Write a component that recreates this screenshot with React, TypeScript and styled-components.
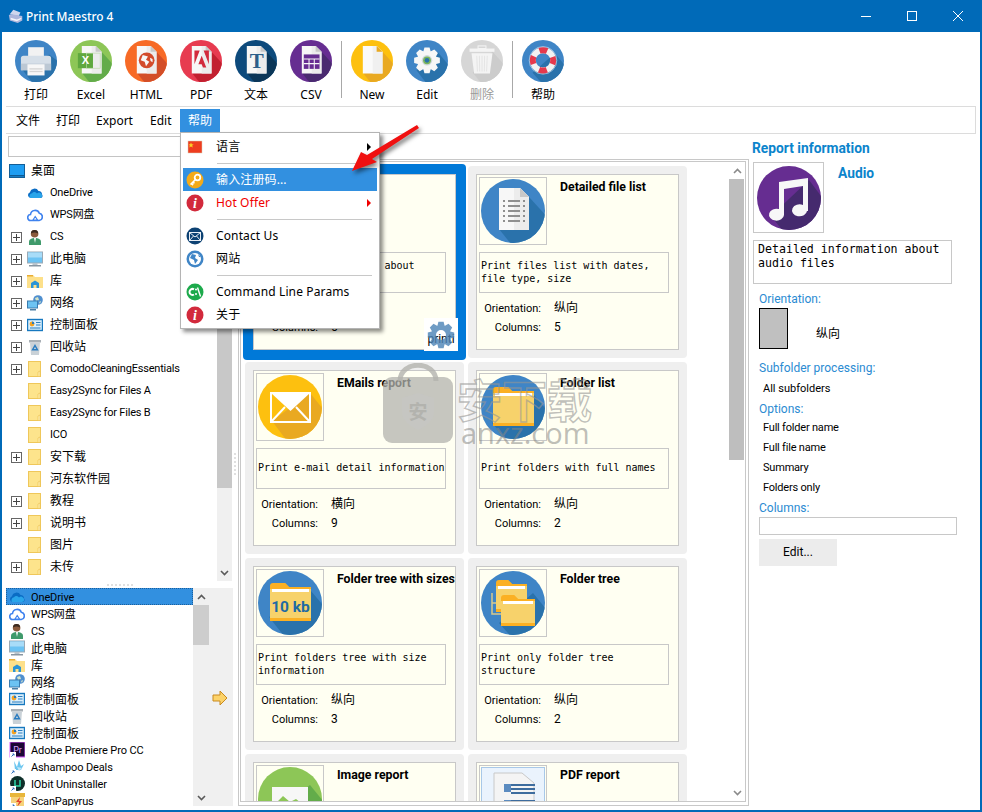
import React, { useId } from "react";
import styled, { createGlobalStyle } from "styled-components";

const Global = createGlobalStyle`
  html, body { margin: 0; padding: 0; background: #fff; }
  * { box-sizing: border-box; }
  body { font-family: Roboto, "Noto Sans CJK SC", sans-serif; font-size: 11px; color: #000; }
`;

const CJK = `"Noto Sans CJK SC", sans-serif`;
const UI = `"Noto Sans", ${CJK}`;
const SMALL = `Roboto, ${CJK}`;
const MONO = `"DejaVu Sans Mono", "Liberation Mono", monospace`;

const Window = styled.div`
  position: relative;
  width: 982px;
  height: 812px;
  border: 2px solid #006ab8;
  border-top: 0;
  display: flex;
  flex-direction: column;
  overflow: hidden;
  background: #fff;
`;
const TitleBar = styled.header`
  height: 32px;
  background: #006ab8;
  display: flex;
  align-items: center;
  padding-left: 6px;
  color: #fff;
  flex: none;
`;
const TitleText = styled.span`
  font: 500 11.9px ${UI};
  margin-left: 2px;
  flex: 1;
`;
const WinButton = styled.span`
  width: 46px;
  height: 32px;
  display: flex;
  align-items: center;
  justify-content: center;
  margin-right: ${(p: { $last?: boolean }) => (p.$last ? "-1px" : "0")};
`;
const Toolbar = styled.div`
  height: 74px;
  flex: none;
  display: flex;
  align-items: flex-start;
  padding: 8px 0 0 6.5px;
`;
const ToolButton = styled.div<{ $off?: boolean }>`
  width: 55px;
  display: flex;
  flex-direction: column;
  align-items: center;
  font: 12px/18px ${UI};
  color: ${(p) => (p.$off ? "#9a9a9a" : "#000")};
  svg { display: block; margin-bottom: 4px; }
`;
const ToolSep = styled.div`
  width: 1px;
  height: 57px;
  margin: 1px 3px 0 2px;
  background: #a8a8a8;
`;
const MenuBar = styled.nav`
  height: 28px;
  width: 970px;
  margin-left: 4px;
  flex: none;
  border: 1px solid #dcdcdc;
  border-left: 0;
  display: flex;
  padding: 2px 0 0 2px;
`;
const MenuItem = styled.span<{ $active?: boolean; $w: number }>`
  width: ${(p) => p.$w}px;
  height: 23px;
  padding-left: 8px;
  font: 12px/23px ${UI};
  color: ${(p) => (p.$active ? "#fff" : "#000")};
  background: ${(p) => (p.$active ? "#3290e0" : "transparent")};
`;
const Main = styled.main`
  flex: 1;
  min-height: 0;
  display: flex;
`;

/* left column */
const LeftCol = styled.section`
  width: 236px;
  flex: none;
  display: flex;
  flex-direction: column;
  padding: 2px 0 4px 4px;
`;
const PathInput = styled.div`
  height: 21px;
  width: 224px;
  margin-left: 2px;
  border: 1px solid #c4c4c4;
  flex: none;
`;
const TreeRow0 = styled.div`
  margin-top: 2px;
  height: 422px;
  flex: none;
  display: flex;
`;
const Tree = styled.div`
  flex: none;
  width: 224px;
  margin-left: 2px;
  display: flex;
  overflow: hidden;
`;
const TreeBody = styled.div`
  flex: 1;
  min-width: 0;
  overflow: hidden;
  padding-top: 1px;
`;
const TreeItem = styled.div`
  height: 22px;
  display: flex;
  align-items: center;
  padding-left: 3px;
  font: 11px/22px ${SMALL};
  white-space: nowrap;
  svg { flex: none; }
`;
const TreeRoot = styled(TreeItem)`
  padding-left: 1px;
  gap: 6px;
  font-size: 12px;
`;
const Expander = styled.span<{ $on: boolean }>`
  width: 11px;
  height: 11px;
  margin-right: 5px;
  flex: none;
  border: ${(p) => (p.$on ? "1px solid #666" : "0")};
  background:
    ${(p) =>
      p.$on
        ? "linear-gradient(#444,#444) center/7px 1px no-repeat, linear-gradient(#444,#444) center/1px 7px no-repeat"
        : "none"};
`;
const TreeLabel = styled.span<{ $cjk?: boolean }>`
  margin-left: 7px;
  font-size: ${(p) => (p.$cjk ? "12px" : "11px")};
  letter-spacing: ${(p) => (p.$cjk ? "0" : "-0.2px")};
`;
const VGrip = styled.div`
  flex: 1;
  display: flex;
  align-items: center;
  justify-content: center;
  padding-top: 190px;
  &::before {
    content: "";
    width: 2px;
    height: 24px;
    background: repeating-linear-gradient(#e0e0e0 0 2px, transparent 2px 4px);
  }
`;
const HGrip = styled.div`
  height: 7px;
  width: 227px;
  flex: none;
  display: flex;
  align-items: center;
  justify-content: center;
  &::before {
    content: "";
    width: 26px;
    height: 2px;
    background: repeating-linear-gradient(90deg, #e0e0e0 0 2px, transparent 2px 4px);
  }
`;
const Bottom = styled.div`
  flex: 1;
  min-height: 0;
  display: flex;
  width: 227px;
  overflow: hidden;
`;
const ListBody = styled.div`
  width: 187px;
  flex: none;
  overflow: hidden;
`;
const ListItem = styled.div<{ $sel?: boolean }>`
  height: 17px;
  display: flex;
  align-items: center;
  gap: 6px;
  padding-left: 3px;
  font: 11px/17px ${SMALL};
  white-space: nowrap;
  background: ${(p) => (p.$sel ? "#3290e0" : "transparent")};
  outline: ${(p) => (p.$sel ? "1px dotted #1c5f9c" : "none")};
  outline-offset: -1px;
  svg { flex: none; }
`;
const ListLabel = styled.span<{ $cjk?: boolean }>`
  font-size: ${(p) => (p.$cjk ? "12px" : "11px")};
  letter-spacing: ${(p) => (p.$cjk ? "0" : "-0.12px")};
  padding-top: ${(p) => (p.$cjk ? "3px" : "2px")};
`;
const MoveStrip = styled.div`
  flex: 1;
  background: #f0f0f0;
  display: flex;
  align-items: flex-start;
  padding: 102px 0 0 3px;
`;

/* scrollbars */
const VBar = styled.div<{ $w: number; $bg: string }>`
  width: ${(p) => p.$w}px;
  flex: none;
  display: flex;
  flex-direction: column;
  background: ${(p) => p.$bg};
`;
const BarArrow = styled.div<{ $h: number }>`
  height: ${(p) => p.$h}px;
  flex: none;
  display: flex;
  align-items: center;
  justify-content: center;
`;
const BarTrack = styled.div`
  flex: 1;
  min-height: 0;
`;
const BarThumb = styled.div<{ $top: number; $h: number; $c: string; $inset: number }>`
  margin-top: ${(p) => p.$top}px;
  margin-right: ${(p) => p.$inset}px;
  height: ${(p) => p.$h}px;
  background: ${(p) => p.$c};
`;

/* centre */
const CenterCol = styled.section`
  width: 511px;
  flex: none;
  margin: 25px 0 4px;
  border: 1px solid #c8c8c8;
  padding: 1px 2px 3px 1px;
  display: flex;
`;
const CenterInner = styled.div`
  flex: 1;
  min-width: 0;
  border: 1px solid #c8c8c8;
  display: flex;
  overflow: hidden;
`;
const CardScroll = styled.div`
  flex: 1;
  min-width: 0;
  overflow: hidden;
  padding: 4px 0 0 4px;
`;
const CardGrid = styled.div`
  display: grid;
  grid-template-columns: 219px 219px;
  grid-auto-rows: 192px;
  gap: 4px;
`;
const Card = styled.article<{ $sel?: boolean }>`
  position: relative;
  display: flex;
  border-radius: 4px;
  background: ${(p) => (p.$sel ? "#0079d8" : "#efefef")};
  padding: ${(p) => (p.$sel ? "10px" : "8px")};
  margin: ${(p) => (p.$sel ? "-2px" : "0")};
`;
const CardInner = styled.div`
  flex: 1;
  min-width: 0;
  border: 1px solid #c8c8c8;
  background: #fffff2;
  padding: 2px;
  overflow: hidden;
`;
const CardHead = styled.div`
  display: flex;
`;
const IconBox = styled.div<{ $size: number }>`
  width: ${(p) => p.$size}px;
  height: ${(p) => p.$size}px;
  flex: none;
  border: 1px solid #c8c8c8;
  display: flex;
  align-items: center;
  justify-content: center;
`;
const CardTitle = styled.h3`
  margin: 3px 0 0 13px;
  font: 700 12.3px/14px ${SMALL};
  white-space: nowrap;
`;
const DescBox = styled.div`
  width: 190px;
  height: 41px;
  margin-top: 7px;
  border: 1px solid #c8c8c8;
  padding: 0 0 2px 1px;
  display: flex;
  align-items: center;
  font: 10px/13px ${MONO};
`;
const Meta = styled.dl`
  margin: 6px 0 0;
  display: grid;
  grid-template-columns: 62px auto;
  column-gap: 13px;
  grid-auto-rows: 19px;
  font: 11px/19px ${SMALL};
  dt { text-align: right; }
  dd { margin: 0; font-size: 12px; }
`;
const GearPatch = styled.div`
  position: absolute;
  right: 8px;
  bottom: 9px;
  width: 34px;
  height: 33px;
  background: #fff;
  font: 12px/42px ${SMALL};
  overflow: hidden;
  white-space: nowrap;
  text-align: center;
  svg { position: absolute; left: 3px; top: 3px; opacity: .82; }
`;

/* right */
const RightCol = styled.aside`
  flex: 1;
  min-width: 0;
  padding: 6px 0 0 3px;
  font: 11px ${SMALL};
`;
const InfoHeading = styled.h2`
  margin: 0;
  font: 700 13.8px/16px ${SMALL};
  color: #0b84cc;
`;
const InfoHead = styled.div`
  display: flex;
  margin: 6px 0 0 1px;
`;
const InfoName = styled.h3`
  margin: 3px 0 0 14px;
  font: 700 13.8px/16px ${SMALL};
  color: #0b84cc;
`;
const InfoDesc = styled.div`
  width: 199px;
  height: 44px;
  margin: 7px 0 0 1px;
  border: 1px solid #c8c8c8;
  padding: 1px 4px;
  font: 11.6px/14px ${MONO};
`;
const InfoBody = styled.div`
  padding-left: 7px;
`;
const SecLabel = styled.div<{ $top: number }>`
  margin-top: ${(p) => p.$top}px;
  font: 12px/16px ${SMALL};
  color: #2b8bd2;
`;
const OrientRow = styled.div`
  display: flex;
  margin-top: 1px;
`;
const PageSwatch = styled.div`
  width: 29px;
  height: 41px;
  background: #c0c0c0;
  border: 1px solid #000;
`;
const OrientValue = styled.span`
  margin: 18px 0 0 28px;
  font-size: 12px;
  line-height: 16px;
`;
const InfoLines = styled.div`
  margin-top: 1px;
`;
const InfoLine = styled.div`
  height: 20px;
  padding-left: 4px;
  line-height: 20px;
  letter-spacing: -0.2px;
`;
const InfoSingle = styled.div`
  height: 16px;
  padding-left: 4px;
  line-height: 16px;
  margin-top: 5px;
`;
const InfoInput = styled.div`
  width: 198px;
  height: 18px;
  margin-top: 1px;
  border: 1px solid #c8c8c8;
`;
const EditBtn = styled.div`
  width: 78px;
  height: 27px;
  margin-top: 4px;
  background: #ececec;
  text-align: center;
  font: 12px/27px ${SMALL};
`;

/* popup */
const Popup = styled.div`
  position: absolute;
  left: 178px;
  top: 132px;
  width: 200px;
  height: 197px;
  background: #fff;
  border: 1px solid #b4b4b4;
  padding: 2px;
  box-shadow: 3px 3px 4px rgba(0, 0, 0, 0.45);
`;
const PopItem = styled.div<{ $hi?: boolean; $hot?: boolean }>`
  position: relative;
  height: 23px;
  display: flex;
  align-items: center;
  padding-left: 3px;
  gap: 12px;
  font: 12px/23px ${UI};
  letter-spacing: 0.13px;
  background: ${(p) => (p.$hi ? "#3290e0" : "transparent")};
  color: ${(p) => (p.$hi ? "#fff" : p.$hot ? "#f00000" : "#000")};
  svg { flex: none; }
`;
const PopArrow = styled.i<{ $c: string }>`
  position: absolute;
  right: 6px;
  top: 8px;
  border: 4px solid transparent;
  border-left-color: ${(p) => p.$c};
  border-right-width: 0;
`;
const PopSep = styled.div`
  height: 1px;
  margin: 5px 5px 4px 34px;
  background: #c8c8c8;
`;
const RedArrow = styled.svg`
  position: absolute;
  left: 338px;
  top: 115px;
  filter: drop-shadow(2px 3px 2px rgba(0, 0, 0, 0.5));
`;
const Mark = styled.div`
  position: absolute;
  left: 379px;
  top: 363px;
  display: flex;
  pointer-events: none;
`;
const MarkWords = styled.div`
  margin: 12px 0 0 2px;
  display: flex;
  flex-direction: column;
  width: 140px;
`;
const MarkCn = styled.span`
  font: 700 45px/47px ${CJK};
  color: transparent;
  -webkit-text-stroke: 1.4px rgba(150, 150, 148, 0.6);
  white-space: nowrap;
`;
const MarkEn = styled.span`
  margin-left: 4px;
  font: 400 29px/22px "Open Sans", sans-serif;
  color: rgba(135, 135, 132, 0.55);
  white-space: nowrap;
`;

/* ---------- drawings ---------- */
const Badge: React.FC<{ size: number; bg: string; shade: string; shadow: string; children?: React.ReactNode }> = ({ size, bg, shade, shadow, children }) => {
  const id = "c" + useId().replace(/[^a-zA-Z0-9]/g, "");
  return (
    <svg width={size} height={size} viewBox="0 0 64 64">
      <clipPath id={id}><circle cx="32" cy="32" r="32" /></clipPath>
      <g clipPath={`url(#${id})`}>
        <rect width="64" height="64" fill={bg} />
        <polygon points={shadow} fill={shade} />
      </g>
      {children}
    </svg>
  );
};
const DOC_SHADOW = "18,50 34,70 70,70 70,42 48,18";
const Doc = () => (
  <>
    <path d="M18 9h21l9 9v33H18z" fill="#f7f7f7" />
    <path d="M33 9h6l9 9v33H33z" fill="#ececec" />
    <path d="M39 9l9 9h-9z" fill="#c8c8c8" />
  </>
);
const gearPath = (cx: number, cy: number, r1: number, r2: number, n: number) => {
  let d = "";
  for (let i = 0; i < n; i++) {
    const a = (i / n) * Math.PI * 2;
    const s = Math.PI / n;
    const pts = [[r1, a - s * 0.95], [r2, a - s * 0.5], [r2, a + s * 0.5], [r1, a + s * 0.95]];
    pts.forEach(([r, t], k) => {
      d += `${i === 0 && k === 0 ? "M" : "L"}${(cx + r * Math.cos(t)).toFixed(1)} ${(cy + r * Math.sin(t)).toFixed(1)}`;
    });
  }
  return d + "Z";
};
const BLUE = { bg: "#3f85c6", shade: "#2a72ab" };

const Printer = ({ size }: { size: number }) => (
  <Badge size={size} {...BLUE} shadow="12,46 30,70 70,70 70,36 52,22">
    <rect x="20" y="11" width="24" height="14" fill="#f2f2f2" />
    <path d="M13 24h38a4 4 0 0 1 4 4v18H9V28a4 4 0 0 1 4-4z" fill="#d6dfe8" />
    <rect x="9" y="36" width="46" height="10" fill="#bcc8d4" />
    <rect x="19" y="37" width="26" height="17" fill="#f7f7f7" />
    <rect x="22" y="43" width="20" height="2" fill="#d5d5d5" />
    <rect x="22" y="47" width="20" height="2" fill="#d5d5d5" />
  </Badge>
);
const Excel = ({ size }: { size: number }) => (
  <Badge size={size} bg="#8dc657" shade="#63ac4a" shadow={DOC_SHADOW}>
    <Doc />
    <rect x="12" y="20" width="23" height="23" fill="#5fa83f" />
    <rect x="25" y="20" width="21" height="23" fill="none" stroke="#bcd9a8" strokeWidth="1" />
    <text x="23.5" y="37" textAnchor="middle" fontFamily="Liberation Sans" fontWeight="700" fontSize="17" fill="#fff">X</text>
  </Badge>
);
const Html = ({ size }: { size: number }) => (
  <Badge size={size} bg="#f76a26" shade="#d34e28" shadow={DOC_SHADOW}>
    <Doc />
    <circle cx="33" cy="31" r="12" fill="#d34b2b" />
    <path d="M27 23l8 2-3 5 5 3-5 7-2-7-6-2zM38 27l4 2 0 5-3-2z" fill="#f7f7f7" />
  </Badge>
);
const Pdf = ({ size }: { size: number }) => (
  <Badge size={size} bg="#e73b50" shade="#c22030" shadow={DOC_SHADOW}>
    <Doc />
    <path d="M22 16h8l-8 21zM44 16h-8l8 21zM33 24l7 18h-5l-2-5h-5z" fill="#d22a3c" />
  </Badge>
);
const TextDoc = ({ size }: { size: number }) => (
  <Badge size={size} bg="#0d4a7c" shade="#0b3658" shadow={DOC_SHADOW}>
    <Doc />
    <text x="33" y="42" textAnchor="middle" fontFamily="Liberation Serif" fontWeight="700" fontSize="32" fill="#2c5f8a">T</text>
  </Badge>
);
const Csv = ({ size }: { size: number }) => (
  <Badge size={size} bg="#662d91" shade="#4a2a70" shadow={DOC_SHADOW}>
    <Doc />
    <rect x="21" y="22" width="24" height="22" fill="#662d91" />
    <path d="M21 29h24M21 36h24M29 29v15M37 29v15" stroke="#f7f7f7" strokeWidth="1.6" />
  </Badge>
);
const NewDoc = ({ size }: { size: number }) => (
  <Badge size={size} bg="#fdc00f" shade="#e9a921" shadow={DOC_SHADOW}>
    <path d="M18 9h21l9 9v33H18z" fill="#fafafa" />
    <path d="M33 9h6l9 9v33H33z" fill="#f0f0f0" />
    <path d="M39 9l9 9h-9z" fill="#e9a921" />
  </Badge>
);
const Edit = ({ size }: { size: number }) => (
  <Badge size={size} {...BLUE} shadow="16,46 34,70 70,70 70,44 48,18">
    <path d={gearPath(32, 31, 15, 20, 8)} fill="#f7f7f7" />
    <circle cx="32" cy="31" r="8" fill="#cfd8dc" />
    <circle cx="32" cy="31" r="6" fill="#7ab55c" />
    <circle cx="32" cy="31" r="3.5" fill="#2a72ab" />
  </Badge>
);
const Trash = ({ size }: { size: number }) => (
  <Badge size={size} bg="#d6d6d6" shade="#cccccc" shadow="18,50 34,70 70,70 70,42 48,18">
    <rect x="13" y="13" width="38" height="5" fill="#f4f4f4" />
    <rect x="26" y="9" width="12" height="4" fill="none" stroke="#f4f4f4" strokeWidth="1.6" />
    <path d="M16 20h32l-4 31H20z" fill="#f4f4f4" />
    <path d="M24 24l1 24M32 24v24M40 24l-1 24M28 24l.5 24M36 24l-.5 24" stroke="#dcdcdc" strokeWidth="1" />
  </Badge>
);
const Help = ({ size }: { size: number }) => (
  <Badge size={size} {...BLUE} shadow="16,50 34,70 70,70 70,44 50,20">
    <circle cx="32" cy="31" r="21" fill="none" stroke="#cfe0ee" strokeWidth="1" />
    <circle cx="32" cy="31" r="15.5" fill="none" stroke="#f2f2f2" strokeWidth="9" />
    <circle cx="32" cy="31" r="15.5" fill="none" stroke="#e5394d" strokeWidth="9" strokeDasharray="12 12.35" strokeDashoffset="6" />
  </Badge>
);
const FileList = ({ size }: { size: number }) => (
  <Badge size={size} {...BLUE} shadow={DOC_SHADOW}>
    <Doc />
    <path d="M22 22h2M27 22h12M42 22h2M22 27h2M27 27h12M42 27h2M22 32h2M27 32h12M42 32h2M22 37h2M27 37h12M42 37h2M22 42h2M27 42h12M42 42h2" stroke="#8f8f8f" strokeWidth="2" />
  </Badge>
);
const Mail = ({ size }: { size: number }) => (
  <Badge size={size} bg="#fdc00f" shade="#e9a921" shadow="14,46 32,70 70,70 70,40 52,18">
    <rect x="13" y="18" width="39" height="29" fill="none" stroke="#fff" strokeWidth="2" />
    <path d="M13 18h39L32.5 36z" fill="#fff" />
    <path d="M13 47l14-15M52 47L38 32" stroke="#fff" strokeWidth="2" />
  </Badge>
);
const FolderBig = ({ x = 12, y = 12, w = 40, h = 36 }: { x?: number; y?: number; w?: number; h?: number }) => (
  <>
    <path d={`M${x} ${y + 3}a3 3 0 0 1 3-3h${w * 0.3}l4 4h${w * 0.7 - 7}v${h - 1}h-${w}z`} fill="#fbb023" />
    <rect x={x} y={y + 6} width={w} height={h - 6} fill="#f7d26b" />
    <rect x={x + 2} y={y + 6} width={w - 4} height="3" fill="#fff" />
  </>
);
const Folder = ({ size }: { size: number }) => (
  <Badge size={size} {...BLUE} shadow="11,48 30,70 70,70 70,40 53,20">
    <FolderBig x={12} y={12} w={41} h={36} />
  </Badge>
);
const FolderSize = ({ size }: { size: number }) => (
  <Badge size={size} {...BLUE} shadow="11,46 30,70 70,70 70,40 53,20">
    <FolderBig x={12} y={12} w={41} h={35} />
    <text x="32.5" y="41" textAnchor="middle" fontFamily="Roboto" fontWeight="700" fontSize="15.5" fill="#1f6aa3">10 kb</text>
  </Badge>
);
const FolderTree = ({ size }: { size: number }) => (
  <Badge size={size} {...BLUE} shadow="18,52 34,70 70,70 70,44 52,22">
    <path d="M11 22v21h10M11 32h8" fill="none" stroke="#d8c98c" strokeWidth="1.5" />
    <FolderBig x={15} y={9} w={31} h={29} />
    <FolderBig x={20} y={24} w={34} h={28} />
  </Badge>
);
const ImageIc = ({ size }: { size: number }) => (
  <Badge size={size} bg="#8dc657" shade="#63ac4a" shadow="14,46 32,70 70,70 70,40 52,18">
    <rect x="14" y="20" width="36" height="26" fill="#f7f7f7" />
    <path d="M16 38l9-9 7 6 6-3 10 8v4H16z" fill="#8dc657" />
  </Badge>
);
const PdfReport = ({ size }: { size: number }) => (
  <svg width={size} height={size} viewBox="0 0 64 64">
    <rect x=".5" y=".5" width="63" height="63" fill="#eaf3fd" stroke="#a8c8e8" />
    <path d="M13 6h28l12 10v44H13z" fill="#f4f4f4" stroke="#c8c8c8" />
    <path d="M30 18h24M30 22h24M30 26h24M30 34h24M30 38h24" stroke="#3d6c9e" strokeWidth="2" />
    <rect x="23" y="17" width="7" height="8" fill="#5b8bc0" />
    <rect x="23" y="33" width="7" height="8" fill="#5b8bc0" />
  </svg>
);
const Audio = ({ size }: { size: number }) => (
  <Badge size={size} bg="#662d91" shade="#452a6e" shadow="14,50 30,70 70,70 70,38 52,14">
    <path d="M22 16l29-4v33h-1a7.5 6 0 1 1-4-6V20l-19 3v26a7.5 6 0 1 1-5-6z" fill="#f7f7f7" />
  </Badge>
);

/* small icons 16px */
const S = ({ children, w = 16 }: { children: React.ReactNode; w?: number }) => (
  <svg width={w} height="16" viewBox="0 0 16 16">{children}</svg>
);
const SmallIcons: Record<string, React.ReactNode> = {
  desk: (
    <svg width="16" height="14" viewBox="0 0 16 14">
      <rect x=".5" y=".5" width="15" height="13" fill="#1e9df2" stroke="#145e96" />
      <rect x="1" y="11" width="14" height="1.5" fill="#0e5a94" />
    </svg>
  ),
  one: <S><path d="M3.5 13A3 3 0 0 1 3 7.2 4.6 4.6 0 0 1 11.5 6a3.6 3.6 0 0 1 3.5 3.6c.8.6 1 3.4-1.3 3.4z" fill="#0a6cc4" /><path d="M3 13a3 3 0 0 1 2-4.7 3 3 0 0 1 5 .3 3 3 0 0 1 5 3c-.2.8-1 1.4-2 1.4z" fill="#29a5ea" /></S>,
  wps: <S><path d="M4 13.5a3 3 0 0 1-.5-6 4.6 4.6 0 0 1 8.8-1.3A3.7 3.7 0 0 1 12.2 13.5z" fill="none" stroke="#3f82ee" strokeWidth="1.6" /><path d="M6 13l2.2-3.5L10.5 13z" fill="#fff" stroke="#3f82ee" strokeWidth="1.2" /></S>,
  cs: <S><path d="M2 16v-3c0-3 3-4 6-4s6 1 6 4v3z" fill="#3f9a6b" /><circle cx="7.6" cy="4.8" r="3.8" fill="#8a5a3c" /><path d="M4 4.5C4 1.5 6 1 7.6 1s3.6.6 3.4 3.5C9 3 6 3 4 4.5z" fill="#3a2a20" /><path d="M7 9l1 5 1-5z" fill="#fff" /></S>,
  pc: <S><rect x=".5" y="1" width="15" height="11" fill="#6cc3f3" stroke="#9aa9b5" /><rect x="1" y="1.5" width="14" height="5" fill="#a8dcf8" /><rect x="5.5" y="12" width="5" height="2" fill="#b9c4cc" /><rect x="2" y="14" width="12" height="1.5" fill="#8896a2" /></S>,
  lib: <S><path d="M0 2h6l2 2h8v11H0z" fill="#fde08a" /><rect y="2" width="6" height="1.5" fill="#e9ad35" /><path d="M4 15V10l4-2.5 4 2.5v5H9.5v-3h-3v3z" fill="#2a94d6" /></S>,
  net: <S><circle cx="11" cy="5" r="4.8" fill="#4f8fcf" /><path d="M8 3l3-1 1 3-3 1zM12 7l2-1-1 3z" fill="#d5e4c8" /><rect x=".5" y="6" width="10" height="7" fill="#6cc3f3" stroke="#3a7cb0" /><rect x="3" y="14" width="6" height="1.5" fill="#4a7ea6" /></S>,
  ctrl: <S><rect x=".5" y="2.5" width="15" height="11" fill="#d9eefb" stroke="#1778bf" strokeWidth="1.4" /><circle cx="5" cy="7" r="2.4" fill="#f2a122" /><path d="M5 7V4.6A2.4 2.4 0 0 1 7.4 7z" fill="#2a7cc0" /><path d="M9 5.5h4.5M9 8h4.5M3 11h10.5" stroke="#2a7cc0" strokeWidth="1.2" /></S>,
  bin: <S><rect x="2" y="1" width="12" height="2.5" fill="#a9b0b6" /><path d="M3 3.5h10l-1 12.5H4z" fill="#c9d1d7" /><path d="M8 6.5l2.4 4.2H5.6z" fill="none" stroke="#2a7cc0" strokeWidth="1.5" /></S>,
  folder: <S><rect x="1.5" y=".5" width="12" height="15" fill="#fde48c" stroke="#efc75a" /><path d="M13 15.5V10l-2 1v4.5z" fill="#fff2b8" stroke="#efc75a" strokeWidth=".8" /></S>,
  pr: <S><rect x="1" y="0" width="15" height="15" fill="#1c0635" stroke="#d95cff" /><text x="8.5" y="11" textAnchor="middle" fontFamily="Roboto" fontSize="9" fill="#d9a6ff">Pr</text><rect x="1" y="10" width="6" height="6" fill="#fff" /><path d="M2.5 14.5l2.5-2.5M3.5 12H5v1.5" stroke="#2a6cbc" fill="none" /></S>,
  ash: <S><path d="M5 2l3 6 2-7 2 6 3-2-3 6H6z" fill="#6cc6f0" /><path d="M8 8l5 1-3 3z" fill="#bfe6f8" /><rect x="1" y="10" width="6" height="6" fill="#fff" /><path d="M2.5 14.5l2.5-2.5M3.5 12H5v1.5" stroke="#2a6cbc" fill="none" /></S>,
  iobit: <S><circle cx="8.5" cy="7.5" r="7.5" fill="#0f2f2a" /><path d="M6 4v6h5V4" fill="none" stroke="#2bd6a8" strokeWidth="1.5" /><rect x="1" y="10" width="6" height="6" fill="#fff" /><path d="M2.5 14.5l2.5-2.5M3.5 12H5v1.5" stroke="#2a6cbc" fill="none" /></S>,
  scan: <S><rect x="1" y="0" width="15" height="4" fill="#e8b63a" /><rect x="2" y="4" width="13" height="12" fill="#f6d27a" /><path d="M11 4L7 9h3l-2 5 5-6h-3z" fill="#e5402b" /><rect x="1" y="10" width="6" height="6" fill="#fff" /><path d="M2.5 14.5l2.5-2.5M3.5 12H5v1.5" stroke="#2a6cbc" fill="none" /></S>,
};

const Chevron = ({ up, c = "#5a5a5a" }: { up?: boolean; c?: string }) => (
  <svg width="9" height="6" viewBox="0 0 9 6">
    <path d={up ? "M1 5l3.5-3.5L8 5" : "M1 1l3.5 3.5L8 1"} fill="none" stroke={c} strokeWidth="1.6" />
  </svg>
);
const VScroll: React.FC<{ w: number; arrow: number; top: number; h: number; c: string; chev?: string; bg?: string; inset?: number }> = ({ w, arrow, top, h, c, chev, bg = "#f0f0f0", inset = 0 }) => (
  <VBar $w={w} $bg={bg}>
    <BarArrow $h={arrow}><Chevron up c={chev} /></BarArrow>
    <BarTrack><BarThumb $top={top} $h={h} $c={c} $inset={inset} /></BarTrack>
    <BarArrow $h={arrow}><Chevron c={chev} /></BarArrow>
  </VBar>
);

/* small round menu icons */
const Flag = () => (
  <svg width="18" height="14" viewBox="0 0 18 14">
    <rect x="2" y="1" width="14" height="12" fill="#ee3c1f" stroke="#d8d0b8" strokeWidth=".5" />
    <path d="M5 2.5l.8 1.8 1.9.1-1.5 1.2.5 1.9L5 6.5l-1.7 1 .5-1.9L2.6 4.4l1.6-.1z" fill="#fbd026" />
  </svg>
);
const Key = () => (
  <svg width="18" height="18" viewBox="0 0 18 18">
    <circle cx="9" cy="9" r="8.5" fill="#f4aa18" />
    <circle cx="11.5" cy="6.5" r="2.8" fill="none" stroke="#fff" strokeWidth="1.8" />
    <path d="M9.5 8.5L4.5 13.5M5.5 12.5l1.6 1.6M7 11l1.4 1.4" stroke="#fff" strokeWidth="1.6" />
  </svg>
);
const Info = () => (
  <svg width="18" height="18" viewBox="0 0 18 18">
    <circle cx="9" cy="9" r="8.5" fill="#d22a3c" />
    <text x="9" y="14" textAnchor="middle" fontFamily="Liberation Serif" fontStyle="italic" fontWeight="700" fontSize="14" fill="#fff">i</text>
  </svg>
);
const MailSmall = () => (
  <svg width="18" height="18" viewBox="0 0 18 18">
    <circle cx="9" cy="9" r="8.5" fill="#0d4273" />
    <rect x="3.5" y="5.5" width="11" height="8" fill="none" stroke="#e8eef5" />
    <path d="M3.5 5.5L9 10l5.5-4.5M3.5 13.5l4-4.5M14.5 13.5l-4-4.5" fill="none" stroke="#e8eef5" />
  </svg>
);
const Globe = () => (
  <svg width="18" height="18" viewBox="0 0 18 18">
    <circle cx="9" cy="9" r="8.5" fill="#3f85c6" />
    <circle cx="9" cy="9" r="6" fill="#fff" />
    <path d="M6 4l4 1-1 3 3 2-3 4-1-4-4-2zM12 4l3 3-2 0z" fill="#3f85c6" />
  </svg>
);
const Cmd = () => (
  <svg width="18" height="18" viewBox="0 0 18 18">
    <circle cx="9" cy="9" r="8.5" fill="#1daa4c" />
    <path d="M8 6.3a3 3 0 1 0 0 5.2" fill="none" stroke="#fff" strokeWidth="2" />
    <circle cx="10" cy="6.5" r="1" fill="#fff" />
    <circle cx="10" cy="11" r="1" fill="#fff" />
    <path d="M11.5 4.5l3 9" stroke="#fff" strokeWidth="1.4" />
  </svg>
);

/* ---------- data ---------- */
const tools: (null | { label: string; Icon: React.FC<{ size: number }>; off?: boolean })[] = [
  { label: "打印", Icon: Printer },
  { label: "Excel", Icon: Excel },
  { label: "HTML", Icon: Html },
  { label: "PDF", Icon: Pdf },
  { label: "文本", Icon: TextDoc },
  { label: "CSV", Icon: Csv },
  null,
  { label: "New", Icon: NewDoc },
  { label: "Edit", Icon: Edit },
  { label: "删除", Icon: Trash, off: true },
  null,
  { label: "帮助", Icon: Help },
];
const tree: [string, string, boolean, boolean][] = [
  ["one", "OneDrive", false, false],
  ["wps", "WPS网盘", false, false],
  ["cs", "CS", true, false],
  ["pc", "此电脑", true, true],
  ["lib", "库", true, true],
  ["net", "网络", true, true],
  ["ctrl", "控制面板", true, true],
  ["bin", "回收站", true, true],
  ["folder", "ComodoCleaningEssentials", true, false],
  ["folder", "Easy2Sync for Files A", false, false],
  ["folder", "Easy2Sync for Files B", false, false],
  ["folder", "ICO", false, false],
  ["folder", "安下载", true, true],
  ["folder", "河东软件园", false, true],
  ["folder", "教程", true, true],
  ["folder", "说明书", true, true],
  ["folder", "图片", false, true],
  ["folder", "未传", true, true],
  ["folder", "", false, false],
];
const list: [string, string, boolean][] = [
  ["one", "OneDrive", false],
  ["wps", "WPS网盘", false],
  ["cs", "CS", false],
  ["pc", "此电脑", true],
  ["lib", "库", true],
  ["net", "网络", true],
  ["ctrl", "控制面板", true],
  ["bin", "回收站", true],
  ["ctrl", "控制面板", true],
  ["pr", "Adobe Premiere Pro CC", false],
  ["ash", "Ashampoo Deals", false],
  ["iobit", "IObit Uninstaller", false],
  ["scan", "ScanPapyrus", false],
];
const cards: { title: string; desc?: string; orient?: string; cols?: number; Icon: React.FC<{ size: number }>; sel?: boolean }[] = [
  { title: "Audio", desc: "Detailed information about audio files", orient: "纵向", cols: 6, Icon: Audio, sel: true },
  { title: "Detailed file list", desc: "Print files list with dates, file type, size", orient: "纵向", cols: 5, Icon: FileList },
  { title: "EMails report", desc: "Print e-mail detail information", orient: "横向", cols: 9, Icon: Mail },
  { title: "Folder list", desc: "Print folders with full names", orient: "纵向", cols: 2, Icon: Folder },
  { title: "Folder tree with sizes", desc: "Print folders tree with size information", orient: "纵向", cols: 3, Icon: FolderSize },
  { title: "Folder tree", desc: "Print only folder tree structure", orient: "纵向", cols: 2, Icon: FolderTree },
  { title: "Image report", Icon: ImageIc },
  { title: "PDF report", Icon: PdfReport },
];
const menus: [string, number][] = [["文件", 40], ["打印", 40], ["Export", 54], ["Edit", 38], ["帮助", 40]];

export default function App() {
  return (
    <>
      <Global />
      <Window>
        <TitleBar>
          <svg width="16" height="16" viewBox="0 0 18 18">
            <path d="M2 7l4-5 8 3-2 4z" fill="#cfd6ee" />
            <path d="M1 8l3-1 12 2v5l-5 3-9-3z" fill="#aeb6dc" />
            <path d="M3 11l7 2 5-2v1.5L10 15l-7-2z" fill="#f4f4fa" />
          </svg>
          <TitleText>Print Maestro 4</TitleText>
          <WinButton><svg width="10" height="10" viewBox="0 0 10 10"><path d="M0 5.5h10" stroke="#fff" /></svg></WinButton>
          <WinButton><svg width="10" height="10" viewBox="0 0 10 10"><rect x=".5" y=".5" width="9" height="9" fill="none" stroke="#fff" /></svg></WinButton>
          <WinButton $last><svg width="10" height="10" viewBox="0 0 10 10"><path d="M0 0l10 10M10 0L0 10" stroke="#fff" /></svg></WinButton>
        </TitleBar>
        <Toolbar>
          {tools.map((t, i) =>
            t ? (
              <ToolButton key={i} $off={t.off}>
                <t.Icon size={42} />
                {t.label}
              </ToolButton>
            ) : (
              <ToolSep key={i} />
            )
          )}
        </Toolbar>
        <MenuBar>
          {menus.map(([m, w], i) => (
            <MenuItem key={m} $w={w} $active={i === 4}>{m}</MenuItem>
          ))}
        </MenuBar>
        <Main>
          <LeftCol>
            <PathInput />
            <TreeRow0>
              <Tree>
                <TreeBody>
                  <TreeRoot>{SmallIcons.desk}<span>桌面</span></TreeRoot>
                  {tree.map(([ic, label, exp, cjk], i) => (
                    <TreeItem key={i}>
                      <Expander $on={exp} />
                      {SmallIcons[ic]}
                      <TreeLabel $cjk={cjk}>{label}</TreeLabel>
                    </TreeItem>
                  ))}
                </TreeBody>
                <VScroll w={15} arrow={16} top={1} h={312} c="#c8c8c8" />
              </Tree>
              <VGrip />
            </TreeRow0>
            <HGrip />
            <Bottom>
              <ListBody>
                {list.map(([ic, label, cjk], i) => (
                  <ListItem key={i} $sel={i === 0}>
                    {SmallIcons[ic]}
                    <ListLabel $cjk={cjk}>{label}</ListLabel>
                  </ListItem>
                ))}
              </ListBody>
              <VScroll w={16} arrow={17} top={0} h={40} c="#cdcdcd" />
              <MoveStrip>
                <svg width="16" height="16" viewBox="0 0 16 16">
                  <path d="M1 5h7V1l7 7-7 7v-4H1z" fill="#fcd36a" stroke="#c98a1e" />
                </svg>
              </MoveStrip>
            </Bottom>
          </LeftCol>
          <CenterCol>
            <CenterInner>
              <CardScroll>
                <CardGrid>
                  {cards.map((c) => (
                    <Card key={c.title} $sel={c.sel}>
                      <CardInner>
                        <CardHead>
                          <IconBox $size={68}><c.Icon size={64} /></IconBox>
                          <CardTitle>{c.title}</CardTitle>
                        </CardHead>
                        {c.desc && (
                          <>
                            <DescBox><span>{c.desc}</span></DescBox>
                            <Meta>
                              <dt>Orientation:</dt><dd>{c.orient}</dd>
                              <dt>Columns:</dt><dd>{c.cols}</dd>
                            </Meta>
                          </>
                        )}
                      </CardInner>
                      {c.sel && (
                        <GearPatch>
                          printi
                          <svg width="28" height="28" viewBox="0 0 28 28">
                            <path d={gearPath(14, 14, 10, 13.5, 8) + "M19 14a5 5 0 1 0-10 0a5 5 0 1 0 10 0z"} fill="#4f86b8" fillRule="evenodd" />
                          </svg>
                        </GearPatch>
                      )}
                    </Card>
                  ))}
                </CardGrid>
              </CardScroll>
              <VScroll w={16} arrow={17} top={0} h={281} c="#bebebe" chev="#8a8a8a" bg="#fff" inset={1} />
            </CenterInner>
          </CenterCol>
          <RightCol>
            <InfoHeading>Report information</InfoHeading>
            <InfoHead>
              <IconBox $size={71}><Audio size={64} /></IconBox>
              <InfoName>Audio</InfoName>
            </InfoHead>
            <InfoDesc>Detailed information about audio files</InfoDesc>
            <InfoBody>
              <SecLabel $top={7}>Orientation:</SecLabel>
              <OrientRow>
                <PageSwatch />
                <OrientValue>纵向</OrientValue>
              </OrientRow>
              <SecLabel $top={11}>Subfolder processing:</SecLabel>
              <InfoSingle>All subfolders</InfoSingle>
              <SecLabel $top={4}>Options:</SecLabel>
              <InfoLines>
                <InfoLine>Full folder name</InfoLine>
                <InfoLine>Full file name</InfoLine>
                <InfoLine>Summary</InfoLine>
                <InfoLine>Folders only</InfoLine>
              </InfoLines>
              <SecLabel $top={2}>Columns:</SecLabel>
              <InfoInput />
              <EditBtn>Edit...</EditBtn>
            </InfoBody>
          </RightCol>
        </Main>

        <Mark>
          <svg width="74" height="82" viewBox="0 0 74 82">
            <path d="M19 18C19 -3 55 -3 55 18" fill="none" stroke="#b3b3ae" strokeWidth="5" opacity=".8" />
            <rect x="2" y="14" width="70" height="66" rx="9" fill="#b3b3ae" opacity=".75" />
            <path d="M37 30l16 5v14c0 9-8 14-16 18-8-4-16-9-16-18V35z" fill="#c6c6c2" />
            <text x="37" y="56" textAnchor="middle" fontFamily="Noto Sans CJK SC" fontWeight="700" fontSize="19" fill="#b3b3ae">安</text>
          </svg>
          <MarkWords>
            <MarkCn>安下载</MarkCn>
            <MarkEn>anxz.com</MarkEn>
          </MarkWords>
        </Mark>

        <Popup>
          <PopItem><Flag />语言<PopArrow $c="#000" /></PopItem>
          <PopSep />
          <PopItem $hi><Key />输入注册码...</PopItem>
          <PopItem $hot><Info />Hot Offer<PopArrow $c="#f00000" /></PopItem>
          <PopSep />
          <PopItem><MailSmall />Contact Us</PopItem>
          <PopItem><Globe />网站</PopItem>
          <PopSep />
          <PopItem><Cmd />Command Line Params</PopItem>
          <PopItem><Info />关于</PopItem>
        </Popup>
        <RedArrow width="90" height="70" viewBox="340 115 90 70">
          <polygon points="352,171 361,152 367,155 417,125 419,128 372,159 377,162" fill="#f01010" />
        </RedArrow>
      </Window>
    </>
  );
}
